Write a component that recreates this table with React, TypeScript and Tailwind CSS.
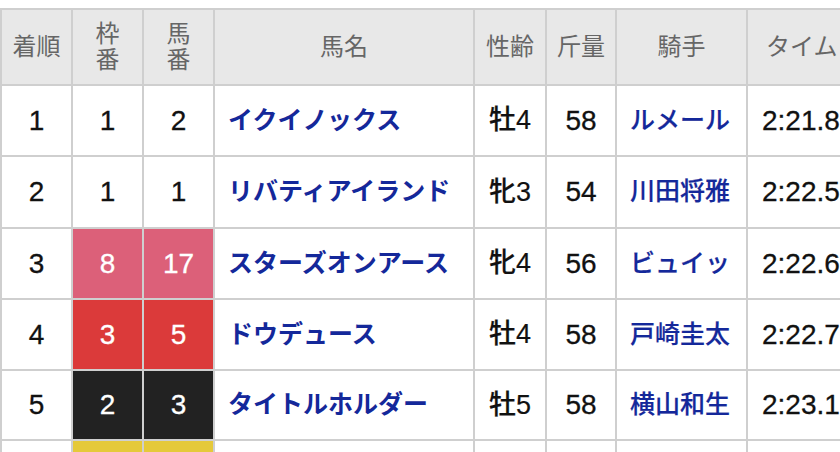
import React from "react";

type Row = {
  rank: string;
  waku: string;
  uma: string;
  name: string;
  sexAge: string;
  weight: string;
  jockey: string;
  time: string;
  h: string;
};

const rows: Row[] = [
  { rank: "1", waku: "1", uma: "2", name: "イクイノックス", sexAge: "牡4", weight: "58", jockey: "ルメール", time: "2:21.8", h: "h-[69px]" },
  { rank: "2", waku: "1", uma: "1", name: "リバティアイランド", sexAge: "牝3", weight: "54", jockey: "川田将雅", time: "2:22.5", h: "h-[70px]" },
  { rank: "3", waku: "8", uma: "17", name: "スターズオンアース", sexAge: "牝4", weight: "56", jockey: "ビュイッ", time: "2:22.6", h: "h-[69px]" },
  { rank: "4", waku: "3", uma: "5", name: "ドウデュース", sexAge: "牡4", weight: "58", jockey: "戸崎圭太", time: "2:22.7", h: "h-[69px]" },
  { rank: "5", waku: "2", uma: "3", name: "タイトルホルダー", sexAge: "牡5", weight: "58", jockey: "横山和生", time: "2:23.1", h: "h-[68px]" },
  { rank: "6", waku: "5", uma: "9", name: "", sexAge: "", weight: "", jockey: "", time: "", h: "h-[69px]" },
];

// 枠の色
const wakuColor: Record<string, string> = {
  "1": "bg-white text-[#111]",
  "2": "bg-[#222222] text-white",
  "3": "bg-[#db3a3a] text-white",
  "5": "bg-[#e5c93a] text-white",
  "8": "bg-[#dc6079] text-white",
};

const font = "font-['Liberation_Sans','Noto_Sans_CJK_JP',sans-serif]";
const num = "text-[28px] [-webkit-text-stroke:0.3px]";

function HeadCell({ children, className = "" }: { children: React.ReactNode; className?: string }) {
  return (
    <div
      className={`flex items-center justify-center bg-[#e8e8e8] text-[24px] leading-[26px] text-[#666666] ${className}`}
    >
      {children}
    </div>
  );
}

export default function App() {
  return (
    <div className={`w-[840px] h-[452px] overflow-hidden bg-white pt-[8px] ${font}`}>
      <div className="grid w-max grid-cols-[69px_69px_69px_258px_70px_68px_129px_130px] gap-[2px] bg-[#cfcfcf] p-[2px]">
        <HeadCell className="h-[74px]">着順</HeadCell>
        <HeadCell>
          <div className="text-center">
            枠<br />番
          </div>
        </HeadCell>
        <HeadCell>
          <div className="text-center">
            馬<br />番
          </div>
        </HeadCell>
        <HeadCell>馬名</HeadCell>
        <HeadCell>性齢</HeadCell>
        <HeadCell>斤量</HeadCell>
        <HeadCell>騎手</HeadCell>
        <HeadCell className="justify-start pl-[18px]">タイム</HeadCell>

        {rows.map((r) => {
          const c = wakuColor[r.waku] ?? "bg-white text-[#111]";
          const last = r.rank === "6";
          return (
            <React.Fragment key={r.rank}>
              <div className={`${r.h} flex items-center justify-center bg-white text-[#111] ${num}`}>
                {last ? "" : r.rank}
              </div>
              <div className={`flex items-center justify-center ${num} ${c}`}>{last ? "" : r.waku}</div>
              <div className={`flex items-center justify-center ${num} ${c}`}>{last ? "" : r.uma}</div>
              <div className="flex items-center bg-white pl-[13px] text-[25px] font-bold text-[#14289a] whitespace-nowrap">
                {r.name}
              </div>
              <div className="flex items-center justify-center bg-white text-[27px] font-medium text-[#111] [-webkit-text-stroke:0.2px]">
                {r.sexAge}
              </div>
              <div className={`flex items-center justify-center bg-white text-[#111] ${num}`}>{r.weight}</div>
              <div className="flex items-center bg-white pl-[13px] text-[25px] font-medium text-[#14289a] whitespace-nowrap [-webkit-text-stroke:0.2px]">
                {r.jockey}
              </div>
              <div className={`flex items-center bg-white pl-[14px] text-[#111] whitespace-nowrap ${num}`}>
                {r.time}
              </div>
            </React.Fragment>
          );
        })}
      </div>
    </div>
  );
}
